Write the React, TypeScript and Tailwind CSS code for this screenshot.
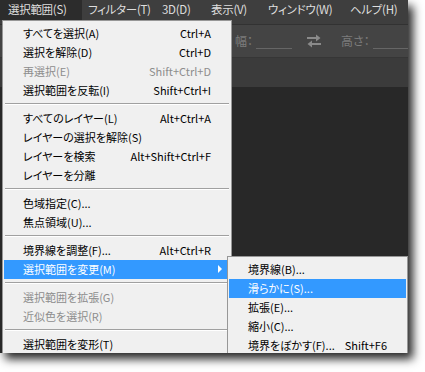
import React from "react";

type Item =
  | { sep: true }
  | { label: string; sc?: string; disabled?: boolean; hl?: boolean; arrow?: boolean };

const mainItems: Item[] = [
  { label: "すべてを選択(A)", sc: "Ctrl+A" },
  { label: "選択を解除(D)", sc: "Ctrl+D" },
  { label: "再選択(E)", sc: "Shift+Ctrl+D", disabled: true },
  { label: "選択範囲を反転(I)", sc: "Shift+Ctrl+I" },
  { sep: true },
  { label: "すべてのレイヤー(L)", sc: "Alt+Ctrl+A" },
  { label: "レイヤーの選択を解除(S)" },
  { label: "レイヤーを検索", sc: "Alt+Shift+Ctrl+F" },
  { label: "レイヤーを分離" },
  { sep: true },
  { label: "色域指定(C)..." },
  { label: "焦点領域(U)..." },
  { sep: true },
  { label: "境界線を調整(F)...", sc: "Alt+Ctrl+R" },
  { label: "選択範囲を変更(M)", hl: true, arrow: true },
  { sep: true },
  { label: "選択範囲を拡張(G)", disabled: true },
  { label: "近似色を選択(R)", disabled: true },
  { sep: true },
  { label: "選択範囲を変形(T)" },
];

const subItems: Item[] = [
  { label: "境界線(B)..." },
  { label: "滑らかに(S)...", hl: true },
  { label: "拡張(E)..." },
  { label: "縮小(C)..." },
  { label: "境界をぼかす(F)...", sc: "Shift+F6" },
];

function Rows({ items }: { items: Item[] }) {
  return (
    <>
      {items.map((it, i) => {
        if ("sep" in it) {
          return (
            <div key={i} className="h-[9px] pt-[3px] px-[2px]">
              <div className="h-px bg-[#a0a0a0]" />
              <div className="h-px bg-white" />
            </div>
          );
        }
        const color = it.hl ? "text-white" : it.disabled ? "text-[#8d8d8d]" : "text-black";
        return (
          <div
            key={i}
            className={`relative h-[19px] mx-[1px] flex items-center pl-[19px] pr-[19px] ${it.hl ? "bg-[#3399ff]" : ""} ${color}`}
          >
            <span className="flex-1 whitespace-nowrap">{it.label}</span>
            {it.sc && <span className="whitespace-nowrap">{it.sc}</span>}
            {it.arrow && (
              <span className="absolute right-[8px] top-[5px] w-0 h-0 border-y-[4px] border-y-transparent border-l-[4px] border-l-white" />
            )}
          </div>
        );
      })}
    </>
  );
}

export default function App() {
  const font = {
    fontFamily: '"Noto Sans CJK JP", "Noto Sans", sans-serif',
  };
  return (
    <div
      className="w-[425px] h-[372px] bg-white relative overflow-hidden [font-feature-settings:'palt']"
      style={font}
    >
      <div className="w-[408px] h-[353px] relative overflow-hidden bg-[#282828] flex flex-col shadow-[5px_6px_9px_rgba(0,0,0,0.85)]">
        {/* menubar */}
        <div className="h-[25px] bg-[#3e3e3e] border-b border-[#323232] flex items-start text-[11.5px] tracking-[-0.3px] text-[#dedede] shrink-0 whitespace-nowrap">
          <div className="h-[20px] w-[82px] shrink-0 bg-[#2c2c2c] flex items-center pl-[8px]">選択範囲(S)</div>
          <div className="h-[20px] w-[80px] shrink-0 flex items-center pl-[6px]">フィルター(T)</div>
          <div className="h-[20px] w-[49px] shrink-0 flex items-center">3D(D)</div>
          <div className="h-[20px] w-[57px] shrink-0 flex items-center">表示(V)</div>
          <div className="h-[20px] w-[82px] shrink-0 flex items-center">ウィンドウ(W)</div>
          <div className="h-[20px] shrink-0 flex items-center">ヘルプ(H)</div>
        </div>
        {/* options bar */}
        <div className="h-[33px] bg-[#444444] border-b border-[#363636] flex items-center text-[12px] text-[#7c7c7c] shrink-0 whitespace-nowrap">
          <div className="ml-[235px] shrink-0 flex items-center">
            <span>幅：</span>
            <div className="w-[36px] h-[16px] border-b border-[#666] ml-[3px]" />
          </div>
          <svg width="16" height="14" viewBox="0 0 16 14" className="ml-[14px] shrink-0">
            <path d="M1 4 H12" stroke="#8a8a8a" strokeWidth="2" />
            <path d="M10 0.5 L14.5 4 L10 7.5 Z" fill="#8a8a8a" />
            <path d="M4 10 H15" stroke="#8a8a8a" strokeWidth="2" />
            <path d="M6 6.5 L1.5 10 L6 13.5 Z" fill="#8a8a8a" />
          </svg>
          <div className="ml-[19px] shrink-0 flex items-center">
            <span>高さ：</span>
            <div className="w-[40px] h-[16px] border-b border-[#666] ml-[3px]" />
          </div>
        </div>
        {/* band */}
        <div className="h-[29px] bg-[#3b3b3b] shrink-0" />
        <div className="flex-1 bg-[#282828]" />

        {/* main menu */}
        <div className="absolute left-[2px] top-[20px] w-[230px] bg-[#f0f0f0] border border-[#979797] pt-[3px] text-[11px] leading-none">
          <Rows items={mainItems} />
          <div className="h-[10px]" />
        </div>

        {/* submenu */}
        <div className="absolute left-[227px] top-[256px] w-[181px] bg-[#f0f0f0] border border-[#979797] pt-[3px] text-[11px] leading-none">
          <Rows items={subItems} />
          <div className="h-[10px]" />
        </div>
      </div>
    </div>
  );
}
